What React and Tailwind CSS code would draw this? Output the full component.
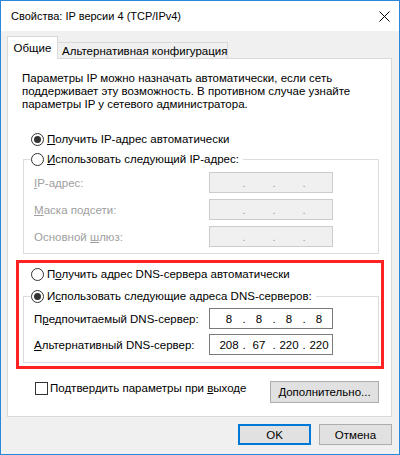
import React from 'react';

// Radio button in the Windows 10 style
const Radio = ({ checked }) => (
    <span className="w-[13px] h-[13px] rounded-full border border-[#333333] bg-white flex items-center justify-center shrink-0">
        {checked && <span className="w-[7px] h-[7px] rounded-full bg-[#333333]" />}
    </span>
);

const IpField = ({ parts, disabled }) => (
    <div
        className={`w-[124px] h-[21px] flex items-center pl-[6px] border ${
            disabled ? 'bg-[#f0f0f0] border-[#cccccc] text-[#9a9a9a]' : 'bg-white border-[#7a7a7a] text-black'
        }`}
    >
        {parts.map((p, i) => (
            <React.Fragment key={i}>
                <span className="w-[26px] text-center">{p}</span>
                {i < 3 && <span className="w-[4px] text-center">.</span>}
            </React.Fragment>
        ))}
    </div>
);

const FieldRow = ({ label, parts, disabled }) => (
    <div className="flex items-center">
        <span className={`w-[175px] ${disabled ? 'text-[#a0a0a0]' : 'text-black'}`}>{label}</span>
        <IpField parts={parts} disabled={disabled} />
    </div>
);

const Button = ({ children, primary, className = '' }) => (
    <div
        className={`h-[21px] flex items-center justify-center bg-[#e1e1e1] ${
            primary ? 'border-2 border-[#0078d7]' : 'border border-[#adadad]'
        } ${className}`}
    >
        {children}
    </div>
);

const App = () => {
    const empty = ['', '', '', ''];

    return (
        <div className="w-[400px] h-[455px] flex flex-col border border-[#2b88d8] bg-[#f0f0f0] text-[11.5px] leading-[16px] text-black whitespace-nowrap font-['Liberation_Sans',sans-serif]">
            {/* Title bar */}
            <div className="h-[30px] bg-white flex items-center justify-between pl-[10px] pr-[9px]">
                <span className="text-[11px]">Свойства: IP версии 4 (TCP/IPv4)</span>
                <svg width="11" height="11" viewBox="0 0 11 11" className="mt-[1px]">
                    <path d="M0.5 0.5 L10.5 10.5 M10.5 0.5 L0.5 10.5" stroke="#000" strokeWidth="1" />
                </svg>
            </div>

            <div className="flex-1 pt-[5px] pl-[6px] pr-[7px]">
                {/* Tabs */}
                <div className="flex items-end -mb-px">
                    <div className="relative z-10 w-[51px] h-[23px] bg-white border border-b-0 border-[#d9d9d9] flex items-center justify-center pb-[1px]">
                        Общие
                    </div>
                    <div className="w-[170px] h-[17px] border-t border-r border-[#d9d9d9] flex items-center pl-[4px]">
                        Альтернативная конфигурация
                    </div>
                </div>

                {/* Panel */}
                <div className="h-[359px] bg-white border border-[#d9d9d9] flex flex-col">
                    <p className="pl-[14px] pr-[10px] pt-[13px] leading-[13px]">
                        Параметры IP можно назначать автоматически, если сеть
                        <br />
                        поддерживает эту возможность. В противном случае узнайте
                        <br />
                        параметры IP у сетевого администратора.
                    </p>

                    <div className="flex items-center gap-[3px] pl-[23px] mt-[20px] h-[16px]">
                        <Radio checked />
                        <span>
                            <u>П</u>олучить IP-адрес автоматически
                        </span>
                    </div>

                    <fieldset className="ml-[15px] mr-[12px] mt-[4px] border border-[#dcdcdc] pb-[6px]">
                        <legend className="ml-[7px] flex items-center gap-[3px] bg-white h-[16px] pr-[4px]">
                            <Radio />
                            <span>
                                <u>И</u>спользовать следующий IP-адрес:
                            </span>
                        </legend>
                        <div className="flex flex-col gap-[6px] mt-[5px] pl-[10px]">
                            <FieldRow
                                disabled
                                parts={empty}
                                label={<><u>I</u>P-адрес:</>}
                            />
                            <FieldRow
                                disabled
                                parts={empty}
                                label={<><u>М</u>аска подсети:</>}
                            />
                            <FieldRow
                                disabled
                                parts={empty}
                                label={<>Основной <u>ш</u>люз:</>}
                            />
                        </div>
                    </fieldset>

                    {/* DNS section, highlighted */}
                    <div className="ml-[8px] mr-[7px] mt-[6px] border-[3px] border-[#ff2222] pt-[3px] pb-[3px]">
                        <div className="flex items-center gap-[3px] pl-[12px] h-[16px]">
                            <Radio />
                            <span>
                                П<u>о</u>лучить адрес DNS-сервера автоматически
                            </span>
                        </div>
                        <fieldset className="ml-[4px] mr-[2px] mt-[6px] border border-[#dcdcdc] pb-[7px]">
                            <legend className="ml-[7px] flex items-center gap-[3px] bg-white h-[16px] pr-[4px]">
                                <Radio checked />
                                <span>
                                    И<u>с</u>пользовать следующие адреса DNS-серверов:
                                </span>
                            </legend>
                            <div className="flex flex-col gap-[5px] mt-[4px] pl-[10px]">
                                <FieldRow
                                    parts={['8', '8', '8', '8']}
                                    label={<>П<u>р</u>едпочитаемый DNS-сервер:</>}
                                />
                                <FieldRow
                                    parts={['208', '67', '220', '220']}
                                    label={<><u>А</u>льтернативный DNS-сервер:</>}
                                />
                            </div>
                        </fieldset>
                    </div>

                    <div className="flex items-start justify-between mt-[12px] pl-[27px] pr-[12px]">
                        <div className="flex items-center gap-[2px] h-[14px]">
                            <span className="w-[13px] h-[13px] border border-[#333333] bg-white shrink-0" />
                            <span>
                                Подтвердить параметры при <u>в</u>ыходе
                            </span>
                        </div>
                        <Button className="w-[109px] h-[22px]">
                            <u>Д</u>ополнительно...
                        </Button>
                    </div>
                </div>

                {/* Dialog buttons */}
                <div className="flex justify-end gap-[8px] mt-[7px]">
                    <Button primary className="w-[73px]">OK</Button>
                    <Button className="w-[73px]">Отмена</Button>
                </div>
            </div>
        </div>
    );
};

export default App;
